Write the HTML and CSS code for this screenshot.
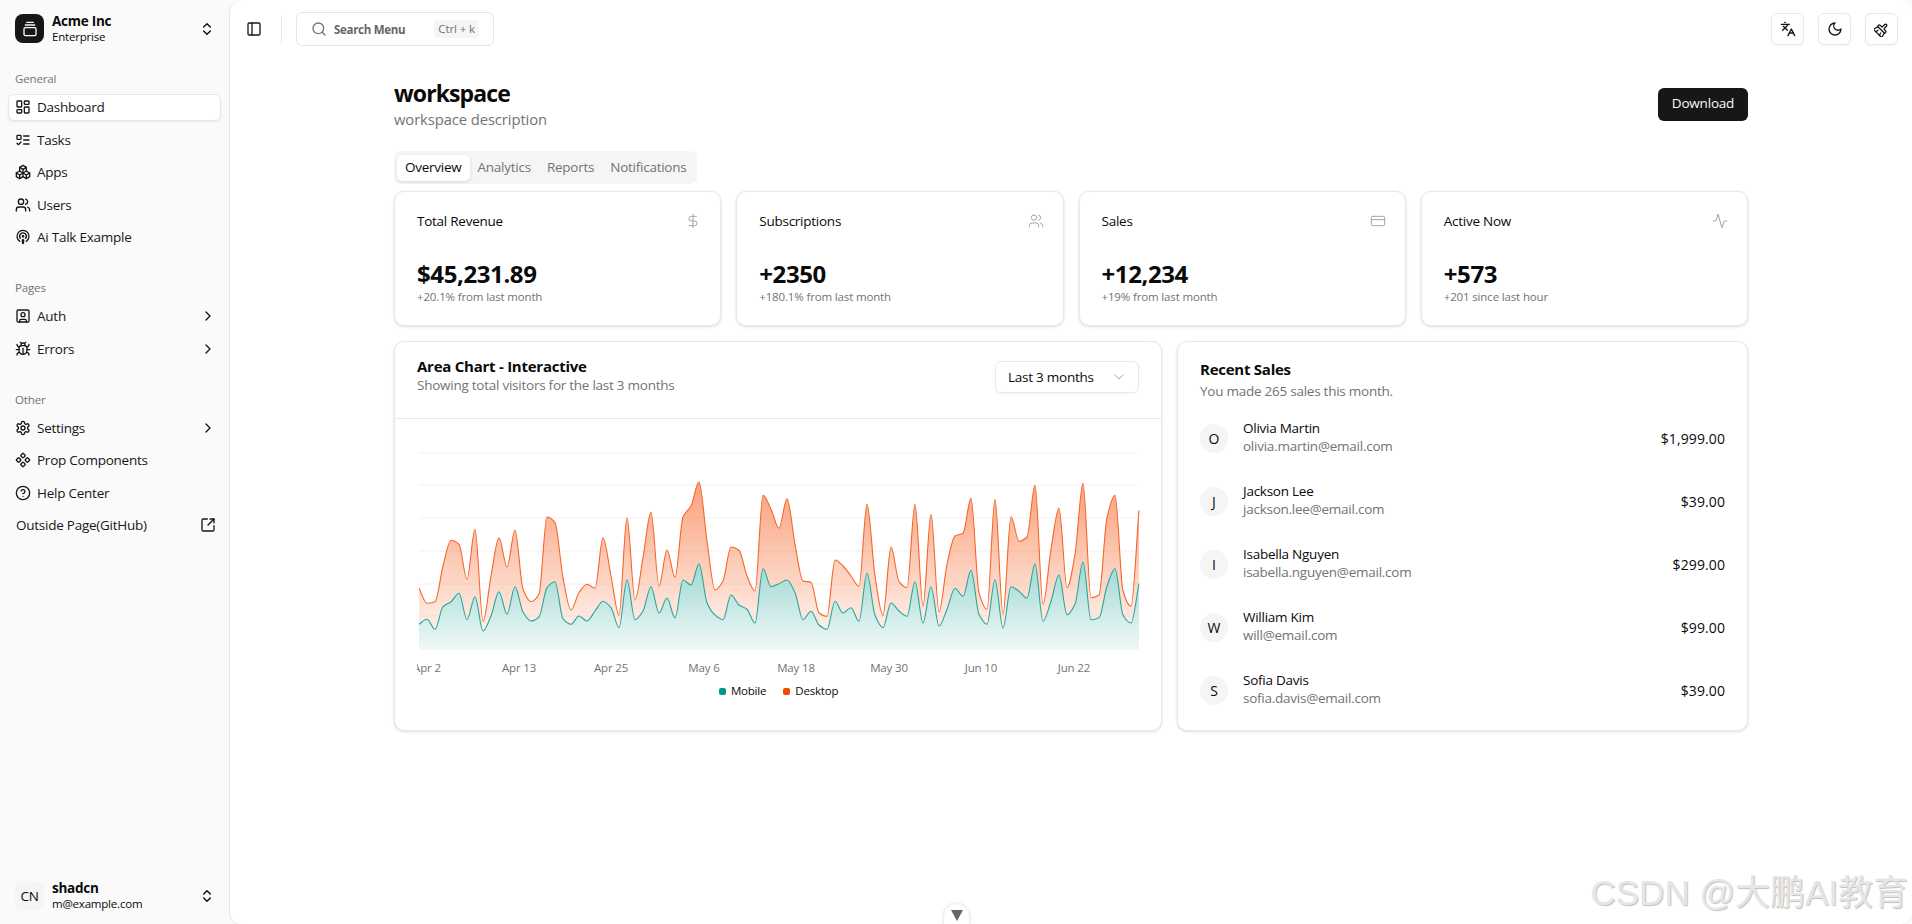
FILE: index.html
```html
<!DOCTYPE html>
<html lang="en">
<head>
<meta charset="utf-8">
<title>Dashboard</title>
<link rel="stylesheet" href="styles.css">
</head>
<body>
<svg class="sprite" aria-hidden="true">
  <symbol id="i-logo" viewBox="0 0 24 24"><path d="M7 2h10"/><path d="M5 6h14"/><rect width="18" height="12" x="3" y="10" rx="2"/></symbol>
  <symbol id="i-updown" viewBox="0 0 24 24"><path d="m7 15 5 5 5-5"/><path d="m7 9 5-5 5 5"/></symbol>
  <symbol id="i-dash" viewBox="0 0 24 24"><rect width="7" height="9" x="3" y="3" rx="1"/><rect width="7" height="5" x="14" y="3" rx="1"/><rect width="7" height="9" x="14" y="12" rx="1"/><rect width="7" height="5" x="3" y="16" rx="1"/></symbol>
  <symbol id="i-tasks" viewBox="0 0 24 24"><rect x="3" y="5" width="6" height="6" rx="1"/><path d="m3 17 2 2 4-4"/><path d="M13 6h8"/><path d="M13 12h8"/><path d="M13 18h8"/></symbol>
  <symbol id="i-apps" viewBox="0 0 24 24"><path d="M7 16.5l-5-3 5-3 5 3v5.5l-5 3z"/><path d="M2 13.5v5.5l5 3"/><path d="M7 16.545l5-3.03"/><path d="M17 16.5l-5-3 5-3 5 3v5.5l-5 3z"/><path d="M12 19l5 3"/><path d="M17 16.5l5-3"/><path d="M12 13.5v-5.5l-5-3 5-3 5 3v5.5"/><path d="M7 5.03v5.455"/><path d="M12 8l5-3"/></symbol>
  <symbol id="i-users" viewBox="0 0 24 24"><path d="M16 21v-2a4 4 0 0 0-4-4H6a4 4 0 0 0-4 4v2"/><circle cx="9" cy="7" r="4"/><path d="M22 21v-2a4 4 0 0 0-3-3.87"/><path d="M16 3.13a4 4 0 0 1 0 7.75"/></symbol>
  <symbol id="i-talk" viewBox="0 0 24 24"><path d="M16.85 18.58a9 9 0 1 0-9.7 0"/><path d="M8 14a5 5 0 1 1 8 0"/><circle cx="12" cy="11" r="1"/><path d="M13 17a1 1 0 1 0-2 0l.5 4.5a.5.5 0 1 0 1 0Z"/></symbol>
  <symbol id="i-auth" viewBox="0 0 24 24"><rect width="18" height="18" x="3" y="3" rx="2"/><circle cx="12" cy="10" r="3"/><path d="M7 21v-2a2 2 0 0 1 2-2h6a2 2 0 0 1 2 2v2"/></symbol>
  <symbol id="i-bug" viewBox="0 0 24 24"><path d="m8 2 1.88 1.88"/><path d="M14.12 3.88 16 2"/><path d="M9 7.13v-1a3.003 3.003 0 1 1 6 0v1"/><path d="M12 20c-3.3 0-6-2.7-6-6v-3a4 4 0 0 1 4-4h4a4 4 0 0 1 4 4v3c0 3.3-2.7 6-6 6"/><path d="M12 20v-9"/><path d="M6.53 9C4.6 8.8 3 7.1 3 5"/><path d="M6 13H2"/><path d="M3 21c0-2.1 1.7-3.9 3.8-4"/><path d="M20.97 5c0 2.1-1.6 3.8-3.5 4"/><path d="M22 13h-4"/><path d="M17.2 17c2.1.1 3.8 1.9 3.8 4"/></symbol>
  <symbol id="i-gear" viewBox="0 0 24 24"><path d="M12.22 2h-.44a2 2 0 0 0-2 2v.18a2 2 0 0 1-1 1.73l-.43.25a2 2 0 0 1-2 0l-.15-.08a2 2 0 0 0-2.73.73l-.22.38a2 2 0 0 0 .73 2.73l.15.1a2 2 0 0 1 1 1.72v.51a2 2 0 0 1-1 1.74l-.15.09a2 2 0 0 0-.73 2.73l.22.38a2 2 0 0 0 2.73.73l.15-.08a2 2 0 0 1 2 0l.43.25a2 2 0 0 1 1 1.73V20a2 2 0 0 0 2 2h.44a2 2 0 0 0 2-2v-.18a2 2 0 0 1 1-1.73l.43-.25a2 2 0 0 1 2 0l.15.08a2 2 0 0 0 2.73-.73l.22-.39a2 2 0 0 0-.73-2.73l-.15-.08a2 2 0 0 1-1-1.74v-.5a2 2 0 0 1 1-1.74l.15-.09a2 2 0 0 0 .73-2.73l-.22-.38a2 2 0 0 0-2.73-.73l-.15.08a2 2 0 0 1-2 0l-.43-.25a2 2 0 0 1-1-1.73V4a2 2 0 0 0-2-2z"/><circle cx="12" cy="12" r="3"/></symbol>
  <symbol id="i-comp" viewBox="0 0 24 24"><path d="M15.536 11.293a1 1 0 0 0 0 1.414l2.376 2.377a1 1 0 0 0 1.414 0l2.377-2.377a1 1 0 0 0 0-1.414l-2.377-2.377a1 1 0 0 0-1.414 0z"/><path d="M2.297 11.293a1 1 0 0 0 0 1.414l2.377 2.377a1 1 0 0 0 1.414 0l2.377-2.377a1 1 0 0 0 0-1.414L6.088 8.916a1 1 0 0 0-1.414 0z"/><path d="M8.916 17.912a1 1 0 0 0 0 1.415l2.377 2.376a1 1 0 0 0 1.414 0l2.377-2.376a1 1 0 0 0 0-1.415l-2.377-2.376a1 1 0 0 0-1.414 0z"/><path d="M8.916 4.674a1 1 0 0 0 0 1.414l2.377 2.376a1 1 0 0 0 1.414 0l2.377-2.376a1 1 0 0 0 0-1.414l-2.377-2.377a1 1 0 0 0-1.414 0z"/></symbol>
  <symbol id="i-help" viewBox="0 0 24 24"><circle cx="12" cy="12" r="10"/><path d="M9.09 9a3 3 0 0 1 5.83 1c0 2-3 3-3 3"/><path d="M12 17h.01"/></symbol>
  <symbol id="i-ext" viewBox="0 0 24 24"><path d="M21 13v6a2 2 0 0 1-2 2H5a2 2 0 0 1-2-2V5a2 2 0 0 1 2-2h6"/><path d="m21 3-9 9"/><path d="M15 3h6v6"/></symbol>
  <symbol id="i-right" viewBox="0 0 24 24"><path d="m9 18 6-6-6-6"/></symbol>
  <symbol id="i-down" viewBox="0 0 24 24"><path d="m6 9 6 6 6-6"/></symbol>
  <symbol id="i-panel" viewBox="0 0 24 24"><rect width="18" height="18" x="3" y="3" rx="2"/><path d="M9 3v18"/></symbol>
  <symbol id="i-search" viewBox="0 0 24 24"><path d="m21 21-4.34-4.34"/><circle cx="11" cy="11" r="8"/></symbol>
  <symbol id="i-lang" viewBox="0 0 24 24"><path d="m5 8 6 6"/><path d="m4 14 6-6 2-3"/><path d="M2 5h12"/><path d="M7 2h1"/><path d="m22 22-5-10-5 10"/><path d="M14 18h6"/></symbol>
  <symbol id="i-moon" viewBox="0 0 24 24"><path d="M12 3a6 6 0 0 0 9 9 9 9 0 1 1-9-9Z"/></symbol>
  <symbol id="i-brush" viewBox="0 0 24 24"><g transform="rotate(45 12 12) translate(.6 .6) scale(.95)"><path d="m16 22-1-4"/><path d="M19 13.99a1 1 0 0 0 1-1V12a2 2 0 0 0-2-2h-3a1 1 0 0 1-1-1V4a2 2 0 0 0-4 0v5a1 1 0 0 1-1 1H6a2 2 0 0 0-2 2v.99a1 1 0 0 0 1 1"/><path d="M5 14h14l1.973 6.767A1 1 0 0 1 20 22H4a1 1 0 0 1-.973-1.233z"/><path d="m8 22 1-4"/></g></symbol>
  <symbol id="i-dollar" viewBox="0 0 24 24"><path d="M12 2v20"/><path d="M17 5H9.5a3.5 3.5 0 0 0 0 7h5a3.5 3.5 0 0 1 0 7H6"/></symbol>
  <symbol id="i-card" viewBox="0 0 24 24"><rect width="20" height="14" x="2" y="5" rx="2"/><path d="M2 10h20"/></symbol>
  <symbol id="i-pulse" viewBox="0 0 24 24"><path d="M22 12h-2.48a2 2 0 0 0-1.93 1.46l-2.35 8.36a.25.25 0 0 1-.48 0L9.24 2.18a.25.25 0 0 0-.48 0l-2.35 8.36A2 2 0 0 1 4.49 12H2"/></symbol>
</svg>

<div class="app">
  <aside class="sidebar">
    <div class="team">
      <span class="logo"><svg class="ic ic-16"><use href="#i-logo"/></svg></span>
      <div class="who"><strong>Acme Inc</strong><span>Enterprise</span></div>
      <svg class="ic ic-16 end"><use href="#i-updown"/></svg>
    </div>

    <nav class="nav">
      <div class="group">
        <h4>General</h4>
        <a class="item active"><svg class="ic"><use href="#i-dash"/></svg>Dashboard</a>
        <a class="item"><svg class="ic"><use href="#i-tasks"/></svg>Tasks</a>
        <a class="item"><svg class="ic"><use href="#i-apps"/></svg>Apps</a>
        <a class="item"><svg class="ic"><use href="#i-users"/></svg>Users</a>
        <a class="item"><svg class="ic"><use href="#i-talk"/></svg>Ai Talk Example</a>
      </div>
      <div class="group">
        <h4>Pages</h4>
        <a class="item"><svg class="ic"><use href="#i-auth"/></svg>Auth<svg class="ic end"><use href="#i-right"/></svg></a>
        <a class="item"><svg class="ic"><use href="#i-bug"/></svg>Errors<svg class="ic end"><use href="#i-right"/></svg></a>
      </div>
      <div class="group">
        <h4>Other</h4>
        <a class="item"><svg class="ic"><use href="#i-gear"/></svg>Settings<svg class="ic end"><use href="#i-right"/></svg></a>
        <a class="item"><svg class="ic"><use href="#i-comp"/></svg>Prop Components</a>
        <a class="item"><svg class="ic"><use href="#i-help"/></svg>Help Center</a>
        <a class="item"><span class="plain">Outside Page(GitHub)</span><svg class="ic end"><use href="#i-ext"/></svg></a>
      </div>
    </nav>

    <div class="team foot">
      <span class="avatar-sq">CN</span>
      <div class="who"><strong>shadcn</strong><span>m@example.com</span></div>
      <svg class="ic ic-16 end"><use href="#i-updown"/></svg>
    </div>
  </aside>

  <main class="main">
    <header class="topbar">
      <svg class="ic toggle"><use href="#i-panel"/></svg>
      <span class="vsep"></span>
      <div class="search">
        <svg class="ic"><use href="#i-search"/></svg>
        <b>Search Menu</b>
        <kbd>Ctrl + k</kbd>
      </div>
      <div class="tools">
        <button class="tool"><svg class="ic"><use href="#i-lang"/></svg></button>
        <button class="tool"><svg class="ic"><use href="#i-moon"/></svg></button>
        <button class="tool"><svg class="ic"><use href="#i-brush"/></svg></button>
      </div>
    </header>

    <section class="content">
      <div class="head">
        <div>
          <h1>workspace</h1>
          <p>workspace description</p>
        </div>
        <button class="download">Download</button>
      </div>

      <div class="tabs">
        <span class="tab on">Overview</span><span class="tab">Analytics</span><span class="tab">Reports</span><span class="tab">Notifications</span>
      </div>

      <div class="stats">
        <article class="card stat">
          <div class="stat-top"><span>Total Revenue</span><svg class="ic faint"><use href="#i-dollar"/></svg></div>
          <div class="stat-val">$45,231.89</div>
          <div class="stat-sub">+20.1% from last month</div>
        </article>
        <article class="card stat">
          <div class="stat-top"><span>Subscriptions</span><svg class="ic faint"><use href="#i-users"/></svg></div>
          <div class="stat-val">+2350</div>
          <div class="stat-sub">+180.1% from last month</div>
        </article>
        <article class="card stat">
          <div class="stat-top"><span>Sales</span><svg class="ic faint"><use href="#i-card"/></svg></div>
          <div class="stat-val">+12,234</div>
          <div class="stat-sub">+19% from last month</div>
        </article>
        <article class="card stat">
          <div class="stat-top"><span>Active Now</span><svg class="ic faint"><use href="#i-pulse"/></svg></div>
          <div class="stat-val">+573</div>
          <div class="stat-sub">+201 since last hour</div>
        </article>
      </div>

      <div class="lower">
        <article class="card chart-card">
          <div class="chart-head">
            <div>
              <h2>Area Chart - Interactive</h2>
              <p>Showing total visitors for the last 3 months</p>
            </div>
            <div class="select"><span>Last 3 months</span><svg class="ic faint"><use href="#i-down"/></svg></div>
          </div>
          <div class="chart-body">
            <svg id="chart" class="chart" viewBox="0 0 722 190"></svg>
            <div class="axis">
              <span>Apr 2</span><span>Apr 13</span><span>Apr 25</span><span>May 6</span><span>May 18</span><span>May 30</span><span>Jun 10</span><span>Jun 22</span>
            </div>
            <div class="legend">
              <span><i class="sw teal"></i>Mobile</span>
              <span><i class="sw orange"></i>Desktop</span>
            </div>
          </div>
        </article>

        <article class="card sales">
          <h2>Recent Sales</h2>
          <p class="sales-sub">You made 265 sales this month.</p>
          <ul class="rows">
            <li><span class="av">O</span><div class="person"><b>Olivia Martin</b><span>olivia.martin@email.com</span></div><em>$1,999.00</em></li>
            <li><span class="av">J</span><div class="person"><b>Jackson Lee</b><span>jackson.lee@email.com</span></div><em>$39.00</em></li>
            <li><span class="av">I</span><div class="person"><b>Isabella Nguyen</b><span>isabella.nguyen@email.com</span></div><em>$299.00</em></li>
            <li><span class="av">W</span><div class="person"><b>William Kim</b><span>will@email.com</span></div><em>$99.00</em></li>
            <li><span class="av">S</span><div class="person"><b>Sofia Davis</b><span>sofia.davis@email.com</span></div><em>$39.00</em></li>
          </ul>
        </article>
      </div>
    </section>

    <button class="scroll-tab" aria-label="Scroll down"><span class="tri"></span></button>
    <div class="watermark">CSDN @大鹏AI教育</div>
  </main>
</div>
<script src="chart.js"></script>
</body>
</html>
```

FILE: styles.css
```css
* { box-sizing: border-box; }
html, body { height: 100%; margin: 0; }
body {
  font-family: "Open Sans", "Noto Sans", "Noto Sans CJK SC", sans-serif;
  font-size: 13.5px;
  color: #0a0a0a;
  background: #fafafa;
  overflow: hidden;
}
.sprite { display: none; }
.ic {
  width: 16px; height: 16px; flex: none;
  fill: none; stroke: currentColor; stroke-width: 2;
  stroke-linecap: round; stroke-linejoin: round;
}
.end { margin-left: auto; }
.faint { color: #a3a3a3; stroke-width: 1.5; }

.app { display: flex; height: 924px; }

.sidebar {
  width: 229px; flex: none;
  display: flex; flex-direction: column;
  padding: 14px 8px 14px 8px;
}
.team { display: flex; align-items: center; gap: 8px; padding: 0 6px 0 7px; height: 29px; }
.logo {
  width: 29px; height: 29px; border-radius: 8px;
  background: #171717; color: #fafafa;
  display: flex; align-items: center; justify-content: center; flex: none;
}
.who { display: flex; flex-direction: column; line-height: 15px; }
.who strong { font-size: 13.5px; font-weight: 700; letter-spacing: -.25px; line-height: 15px; }
.who span { font-size: 11.5px; letter-spacing: -.2px; }
.nav { flex: 1; display: flex; flex-direction: column; gap: 23.5px; padding-top: 28px; }
.group h4 {
  margin: 0; font-size: 11.5px; font-weight: 400; color: #737373;
  padding-left: 7px; height: 23px; line-height: 16px; letter-spacing: -.15px;
}
.item {
  display: flex; align-items: center; gap: 6px;
  height: 26.5px; padding: 0 4.5px 0 6px;
  margin-bottom: 6px;
  border: 1px solid transparent; border-radius: 6px;
  color: #171717; letter-spacing: -.25px;
  white-space: nowrap;
}
.item.active { background: #fff; border-color: #e8e8e8; box-shadow: 0 1px 2px rgba(0,0,0,.08); }
.plain { margin-left: 1px; }
.foot { margin-bottom: 0; }
.avatar-sq {
  width: 29px; height: 29px; border-radius: 8px; background: #f5f5f5;
  display: flex; align-items: center; justify-content: center; flex: none;
  letter-spacing: -.3px;
}

.main {
  flex: 1; min-width: 0; background: #fff; position: relative;
  border-radius: 12px; border-left: 1px solid #e8e8e8;
  box-shadow: 0 1px 2px rgba(0,0,0,.04);
  display: flex; flex-direction: column; overflow: hidden;
}
.topbar { display: flex; align-items: center; height: 58px; padding: 0 14px 0 16px; flex: none; }
.toggle { color: #171717; margin-right: 19px; }
.vsep { width: 1px; height: 29px; background: #e8e8e8; margin-right: 14px; }
.search {
  width: 198px; height: 34px; border: 1px solid #e5e5e5; border-radius: 6px;
  display: flex; align-items: center; padding: 0 14px; color: #737373;
}
.search b { font-size: 11.5px; margin-left: 7px; font-weight: 700; letter-spacing: -.3px; color: #666; }
.search kbd {
  margin-left: auto; font: inherit; font-size: 11.5px; background: #f5f5f5;
  border-radius: 4px; padding: 0 4px; height: 18px; line-height: 18px; white-space: nowrap; letter-spacing: -.1px;
}
.tools { margin-left: auto; display: flex; gap: 14px; }
.tool {
  width: 33px; height: 32px; padding: 0; border: 1px solid #e8e8e8; border-radius: 6px;
  background: #fff; color: #171717; display: flex; align-items: center; justify-content: center;
  box-shadow: 0 1px 2px rgba(0,0,0,.05);
}

.content { width: 1354px; margin: 0 auto; padding-top: 20px; flex: none; }
.head { display: flex; justify-content: space-between; align-items: flex-start; height: 73px; }
.head h1 { margin: 0; font-size: 23px; line-height: 30px; font-weight: 700; letter-spacing: -.9px; }
.head p { margin: 0; font-size: 14.8px; line-height: 22px; color: #737373; letter-spacing: -.1px; }
.download {
  margin-top: 10px; width: 90px; height: 33px; border: 0; border-radius: 6px;
  background: #171717; color: #fafafa; font: inherit; letter-spacing: -.2px; padding: 0 0 3px;
}
.tabs {
  display: inline-flex; height: 33px; padding: 3px; background: #f5f5f5; border-radius: 7px;
  align-items: center; vertical-align: top;
}
.tab { padding: 0 8px 2px; line-height: 24px; color: #737373; letter-spacing: -.25px; border-radius: 5px; }
.tab.on { background: #fff; color: #0a0a0a; box-shadow: 0 1px 3px rgba(0,0,0,.12); }

.card {
  background: #fff; border: 1px solid #e8e8e8; border-radius: 10px;
  box-shadow: 0 1px 3px rgba(0,0,0,.14);
}
.stats { display: grid; grid-template-columns: repeat(4, 1fr); gap: 15px; margin-top: 7px; }
.stat { height: 135px; padding: 19px 19px 0 22px; }
.stat-top { display: flex; justify-content: space-between; align-items: center; height: 20px; letter-spacing: -.25px; }
.stat-val { margin-top: 27px; font-size: 24px; line-height: 31px; font-weight: 700; letter-spacing: -.4px; color: #0a0a0a; }
.stat-sub { font-size: 11.5px; line-height: 15px; color: #737373; letter-spacing: -.15px; }

.lower { display: grid; grid-template-columns: 768px 1fr; column-gap: 15px; margin-top: 15px; }
.chart-card { height: 390px; }
.chart-head {
  height: 77px; border-bottom: 1px solid #e8e8e8;
  display: flex; justify-content: space-between; align-items: flex-start; padding: 14px 22px 0;
}
.chart-head h2, .sales h2 { margin: 0; font-size: 15px; line-height: 20px; font-weight: 700; letter-spacing: -.25px; }
.chart-head p { margin: 0; line-height: 19px; color: #737373; letter-spacing: -.25px; }
.select {
  margin-top: 5px; width: 144px; height: 32px; border: 1px solid #e8e8e8; border-radius: 6px;
  box-shadow: 0 1px 2px rgba(0,0,0,.05);
  display: flex; align-items: center; justify-content: space-between; padding: 0 11px 0 12px; letter-spacing: -.25px;
}
.chart-body { padding: 33px 0 0 23px; }
.chart { display: block; width: 722px; height: 190px; overflow: visible; }
.axis {
  position: relative; height: 22px; margin: 15px 0 0 -1px; font-size: 11.5px; color: #737373;
  width: 725px; overflow: hidden; letter-spacing: -.15px;
}
.axis span { position: absolute; top: 1px; transform: translateX(-50%); white-space: nowrap; line-height: 20px; }
.axis span:nth-child(1) { left: 10px; }
.axis span:nth-child(2) { left: 102px; }
.axis span:nth-child(3) { left: 194px; }
.axis span:nth-child(4) { left: 287px; }
.axis span:nth-child(5) { left: 379px; }
.axis span:nth-child(6) { left: 472px; }
.axis span:nth-child(7) { left: 564px; }
.axis span:nth-child(8) { left: 657px; }
.legend {
  display: flex; justify-content: center; gap: 17px; font-size: 11.5px; width: 722px;
  margin: 4px 0 0 -.4px; line-height: 16px; letter-spacing: -.2px;
}
.legend span { display: inline-flex; align-items: center; gap: 5px; }
.sw { width: 7px; height: 7px; border-radius: 2px; display: block; }
.teal { background: #009689; }
.orange { background: #f54900; }

.sales { padding: 17px 22px 0; height: 390px; }
.sales-sub { margin: 2px 0 0; color: #737373; line-height: 20px; letter-spacing: -.25px; }
.rows { list-style: none; margin: 5.5px 0 0; padding: 0; }
.rows li { display: flex; align-items: center; height: 63px; }
.av {
  width: 28px; height: 29px; border-radius: 50%; background: #f5f5f5;
  display: flex; align-items: center; justify-content: center; flex: none; font-size: 14px;
}
.person { margin: 0 0 2px 15px; display: flex; flex-direction: column; line-height: 18.5px; letter-spacing: -.25px; }
.person b { font-weight: 400; }
.person span { color: #737373; }
.rows em { margin-left: auto; font-style: normal; font-size: 14px; letter-spacing: .1px; }

.scroll-tab {
  position: absolute; left: 713px; bottom: -20px; width: 27px; height: 41px;
  border-radius: 14px; border: 1px solid #eee; background: #fff; box-shadow: 0 0 4px rgba(0,0,0,.08);
  display: flex; justify-content: center; padding: 6px 0 0;
}
.tri { width: 0; height: 0; border: 6px solid transparent; border-top: 11px solid #666; border-bottom: 0; }
.watermark {
  position: absolute; right: 4px; bottom: 11px; font-family: "Liberation Sans", "Noto Sans CJK SC", sans-serif;
  font-size: 35px; line-height: 40px; color: #e6e6e6; text-shadow: 1px 1px 1px #c0c0c0; white-space: nowrap; pointer-events: none;
}
```

FILE: chart.js
```js
// Zoomed-reference samples, one per day (Apr 1 - Jun 30); y is in chart pixels.
var desktop = [442,487,482,375,298,310,415,265,542,405,290,378,268,445,482,460,228,245,410,507,455,430,442,290,405,523,230,477,350,214,436,327,409,228,195,123,300,447,420,318,328,405,450,163,205,262,173,310,420,424,515,526,357,375,405,436,190,405,523,318,422,440,190,495,220,513,370,285,277,172,455,505,175,520,227,301,288,133,490,325,202,440,340,127,470,462,230,163,450,496,208];
var mobile = [550,535,565,497,482,457,536,467,570,525,452,520,437,513,540,528,440,422,533,550,525,540,510,481,500,560,416,536,510,437,516,471,531,417,432,368,485,522,536,462,492,505,546,383,437,428,417,455,536,511,552,565,481,516,500,541,397,523,560,486,510,526,422,546,437,555,505,442,466,388,520,550,416,561,437,451,471,368,541,481,402,521,490,363,536,530,436,383,522,546,428];

var W = 720, TOP = 452, BASE = 649;
function toY(zy) { return (440 + zy / 3) - TOP + 1; }
function toX(i) { return 1 + i * W / 90; }

// d3 curveMonotoneX
function monotone(pts) {
  var n = pts.length, d = [], m = [], s = "M" + pts[0][0] + "," + pts[0][1], i;
  for (i = 0; i < n - 1; i++) d[i] = (pts[i + 1][1] - pts[i][1]) / (pts[i + 1][0] - pts[i][0]);
  m[0] = d[0]; m[n - 1] = d[n - 2];
  for (i = 1; i < n - 1; i++) m[i] = d[i - 1] * d[i] <= 0 ? 0 : (2 * d[i - 1] * d[i]) / (d[i - 1] + d[i]);
  for (i = 0; i < n - 1; i++) {
    var h = (pts[i + 1][0] - pts[i][0]) / 3;
    s += "C" + (pts[i][0] + h) + "," + (pts[i][1] + m[i] * h) + " " + (pts[i + 1][0] - h) + "," + (pts[i + 1][1] - m[i + 1] * h) + " " + pts[i + 1][0] + "," + pts[i + 1][1];
  }
  return s;
}

var NS = "http://www.w3.org/2000/svg";
var svg = document.getElementById("chart");
function add(parent, tag, attrs) {
  var el = document.createElementNS(NS, tag);
  for (var k in attrs) el.setAttribute(k, attrs[k]);
  parent.appendChild(el);
  return el;
}
function gradient(id, color, a, b) {
  var g = add(defs, "linearGradient", { id: id, x1: 0, y1: 0, x2: 0, y2: 1 });
  add(g, "stop", { offset: "0%", "stop-color": color, "stop-opacity": a });
  add(g, "stop", { offset: "100%", "stop-color": color, "stop-opacity": b });
}
var defs = add(svg, "defs", {});
gradient("gOrange", "#f54900", 0.52, 0.02);
gradient("gTeal", "#009689", 0.38, 0.06);

var bottom = BASE - TOP + 1;
[1, 33, 66, 99, 132, 164].forEach(function (y) {
  add(svg, "line", { x1: 1, x2: W + 1, y1: y, y2: y, stroke: "#f2f2f2", "stroke-width": 1 });
});

function series(data, grad, stroke, opaque) {
  var pts = data.map(function (v, i) { return [toX(i), Math.round(toY(v) * 10) / 10]; });
  var line = monotone(pts);
  var area = line + "L" + toX(90) + "," + bottom + "L1," + bottom + "Z";
  if (opaque) add(svg, "path", { d: area, fill: "#fff" });
  add(svg, "path", { d: area, fill: "url(#" + grad + ")" });
  add(svg, "path", { d: line, fill: "none", stroke: stroke, "stroke-width": 1.1 });
}
series(desktop, "gOrange", "#f5652a", false);
series(mobile, "gTeal", "#2aa598", true);
```
